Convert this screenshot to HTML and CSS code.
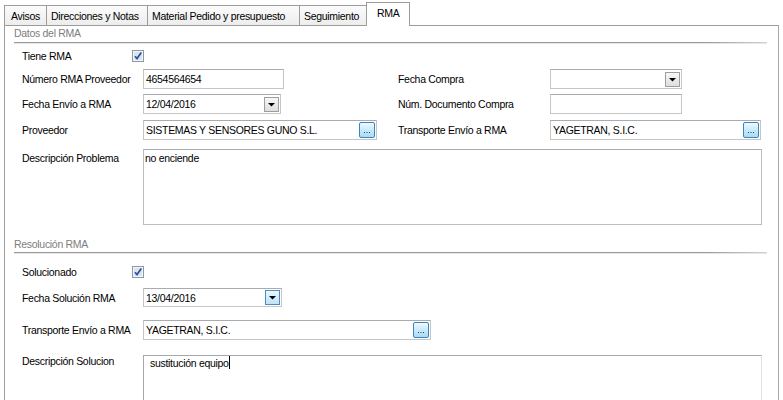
FILE: index.html
```html
<!DOCTYPE html>
<html>
<head>
<meta charset="utf-8">
<link rel="stylesheet" href="styles.css">
</head>
<body>
<div class="tabs">
  <div class="tab t1">Avisos</div>
  <div class="tab t2">Direcciones y Notas</div>
  <div class="tab t3">Material Pedido y presupuesto</div>
  <div class="tab t4">Seguimiento</div>
  <div class="tab active">RMA</div>
</div>
<div class="panel">
  <div class="sec-title">Datos del RMA</div>
  <div class="sec-line"></div>
  <div class="fields">
    <div class="row r-a">
      <span class="lbl lbl-chk">Tiene RMA</span>
      <svg class="chk" width="12" height="12" viewBox="0 0 12 12"><rect x="0.5" y="0.5" width="11" height="11" fill="#f2f4f7" stroke="#8f9aa8"/><rect x="2" y="2" width="8" height="8" fill="#dfe4ea"/><path d="M3 6.2 L5 8.6 L9.3 2.6" fill="none" stroke="#2252b0" stroke-width="1.7"/></svg>
    </div>
    <div class="row r-b">
      <span class="lbl">Número RMA Proveedor</span>
      <div class="cell"><div class="input w-num">4654564654</div></div>
      <span class="lbl lbl2">Fecha Compra</span>
      <div class="input combo w-right-s"><span class="val"></span><span class="dd"><svg width="13" height="13" viewBox="0 0 13 13"><polygon points="3,5 10,5 6.5,8.5" fill="#000"/></svg></span></div>
    </div>
    <div class="row r-c">
      <span class="lbl">Fecha Envío a RMA</span>
      <div class="cell"><div class="input combo w-date">12/04/2016<span class="dd"><svg width="13" height="13" viewBox="0 0 13 13"><polygon points="3,5 10,5 6.5,8.5" fill="#000"/></svg></span></div></div>
      <span class="lbl lbl2">Núm. Documento Compra</span>
      <div class="input w-right-s"></div>
    </div>
    <div class="row r-d">
      <span class="lbl">Proveedor</span>
      <div class="cell"><div class="input combo w-prov">SISTEMAS Y SENSORES GUNO S.L.<span class="ell"><svg width="14" height="14" viewBox="0 0 14 14"><rect x="4" y="9" width="1" height="1" fill="#1d3f66"/><rect x="6.5" y="9" width="1" height="1" fill="#1d3f66"/><rect x="9" y="9" width="1" height="1" fill="#1d3f66"/></svg></span></div></div>
      <span class="lbl lbl2">Transporte Envío a RMA</span>
      <div class="input combo w-right-l">YAGETRAN, S.I.C.<span class="ell"><svg width="14" height="14" viewBox="0 0 14 14"><rect x="4" y="9" width="1" height="1" fill="#1d3f66"/><rect x="6.5" y="9" width="1" height="1" fill="#1d3f66"/><rect x="9" y="9" width="1" height="1" fill="#1d3f66"/></svg></span></div>
    </div>
    <div class="row r-e">
      <span class="lbl lbl-top">Descripción Problema</span>
      <div class="area area1">no enciende</div>
    </div>
  </div>
  <div class="sec-title sec-title2">Resolución RMA</div>
  <div class="sec-line"></div>
  <div class="fields">
    <div class="row r-f">
      <span class="lbl lbl-chk">Solucionado</span>
      <svg class="chk" width="12" height="12" viewBox="0 0 12 12"><rect x="0.5" y="0.5" width="11" height="11" fill="#f2f4f7" stroke="#8f9aa8"/><rect x="2" y="2" width="8" height="8" fill="#dfe4ea"/><path d="M3 6.2 L5 8.6 L9.3 2.6" fill="none" stroke="#2252b0" stroke-width="1.7"/></svg>
    </div>
    <div class="row r-g">
      <span class="lbl">Fecha Solución RMA</span>
      <div class="input combo w-date2">13/04/2016<span class="dd dd-focus"><svg width="13" height="13" viewBox="0 0 13 13"><polygon points="3,5 10,5 6.5,8.5" fill="#000"/></svg></span></div>
    </div>
    <div class="row r-h">
      <span class="lbl">Transporte Envío a RMA</span>
      <div class="input combo w-trans">YAGETRAN, S.I.C.<span class="ell"><svg width="14" height="14" viewBox="0 0 14 14"><rect x="4" y="9" width="1" height="1" fill="#1d3f66"/><rect x="6.5" y="9" width="1" height="1" fill="#1d3f66"/><rect x="9" y="9" width="1" height="1" fill="#1d3f66"/></svg></span></div>
    </div>
    <div class="row r-i">
      <span class="lbl lbl-top2">Descripción Solucion</span>
      <div class="area area2">sustitución equipo<span class="caret"></span></div>
    </div>
  </div>
</div>
</body>
</html>
```

FILE: styles.css
```css
body {
  margin: 0;
  background: #fff;
  font-family: "Liberation Sans", Arial, sans-serif;
  font-size: 10.5px;
  letter-spacing: -0.3px;
  color: #000;
  width: 783px;
  height: 400px;
  overflow: hidden;
}

.tabs {
  display: flex;
  align-items: flex-end;
  height: 25px;
  padding-left: 4px;
}

.tab {
  box-sizing: border-box;
  height: 20px;
  border-top: 1px solid #9c9c9c;
  border-left: 1px solid #9c9c9c;
  background: linear-gradient(#fbfbfb, #ededed);
  display: flex;
  align-items: center;
  padding-left: 6px;
  white-space: nowrap;
}

.t1 { width: 42px; }
.t2 { width: 101px; padding-left: 4px; }
.t3 { width: 152px; padding-left: 4px; }
.t4 { width: 67px; padding-left: 4px; }

.tab.active {
  position: relative;
  z-index: 1;
  width: 44px;
  height: 24px;
  margin-bottom: -1px;
  background: #fff;
  border-right: 1px solid #9c9c9c;
  padding-left: 10px;
  padding-bottom: 3px;
}

.panel {
  box-sizing: border-box;
  width: 775px;
  height: 375px;
  margin-left: 4px;
  border: 1px solid #9c9c9c;
  border-bottom: none;
  border-right-color: #a8a8a8;
}

.sec-title {
  height: 16px;
  line-height: 14px;
  padding-left: 9px;
  color: #7d7d7d;
}

.sec-title2 {
  margin-top: 11px;
  line-height: 17px;
}

.sec-line {
  margin-left: 9px;
  width: 753px;
  height: 1px;
  background: linear-gradient(to right, #9a9a9a 0%, #9a9a9a 92%, #d4d4d4 100%);
  border-bottom: 1px solid #e6e6e6;
}

.fields {
  padding-left: 17px;
}

.row {
  display: flex;
  align-items: center;
}

.lbl {
  flex: none;
  width: 121px;
  white-space: nowrap;
}

.lbl-chk { width: 110px; }
.lbl2 { width: 152px; }

.chk { display: block; flex: none; }

.cell {
  flex: none;
  width: 255px;
}

.input {
  box-sizing: border-box;
  height: 20px;
  border: 1px solid #c5c5c5;
  border-top-color: #a9abb2;
  background: #fff;
  display: flex;
  align-items: center;
  padding-left: 2px;
  white-space: nowrap;
  flex: none;
}

.combo { padding-right: 1px; }

.w-num { width: 141px; }
.w-date { width: 138px; }
.w-prov { width: 234px; }
.w-right-s { width: 132px; }
.w-right-l { width: 211px; }
.w-date2 { width: 139px; height: 19px; }
.w-trans { width: 288px; }

.dd {
  box-sizing: border-box;
  margin-left: auto;
  width: 15px;
  height: 15px;
  border: 1px solid #9d9d9d;
  background: linear-gradient(#f7f7f7, #dedede);
  display: flex;
  align-items: center;
  justify-content: center;
}

.dd svg { display: block; }

.dd-focus {
  border-color: #4e8cc0;
  background: linear-gradient(#eaf6fd, #bfe2f7);
}

.ell {
  box-sizing: border-box;
  margin-left: auto;
  width: 16px;
  height: 16px;
  border: 1px solid #3c84be;
  border-radius: 2px;
  background: linear-gradient(#f2f9fe, #c9e9fb 50%, #a9dbf6);
  display: flex;
  align-items: center;
  justify-content: center;
}

.ell svg { display: block; }

.area {
  box-sizing: border-box;
  flex: none;
  width: 619px;
  border: 1px solid #bdbdbd;
  border-top-color: #a9abb2;
  background: #fff;
  padding: 2px 1px;
  line-height: 13px;
}

.area1 { height: 76px; }

.area2 {
  height: 60px;
  padding: 0 6px;
  border-color: #a5a7ae;
  border-right-color: #e2e2e2;
}

.caret {
  display: inline-block;
  width: 1px;
  height: 13px;
  background: #000;
  vertical-align: -2px;
}

.r-e, .r-i { align-items: flex-start; }
.lbl-top { padding-top: 3px; }
.lbl-top2 { padding-top: 0; }

.r-a { margin-top: 6px; height: 12px; }
.r-b { margin-top: 7px; height: 20px; }
.r-c { margin-top: 5px; height: 20px; }
.r-d { margin-top: 6px; height: 20px; }
.r-e { margin-top: 9px; }
.r-f { margin-top: 12px; height: 12px; }
.r-g { margin-top: 10px; height: 19px; }
.r-h { margin-top: 13px; height: 20px; }
.r-i { margin-top: 15px; }
```
